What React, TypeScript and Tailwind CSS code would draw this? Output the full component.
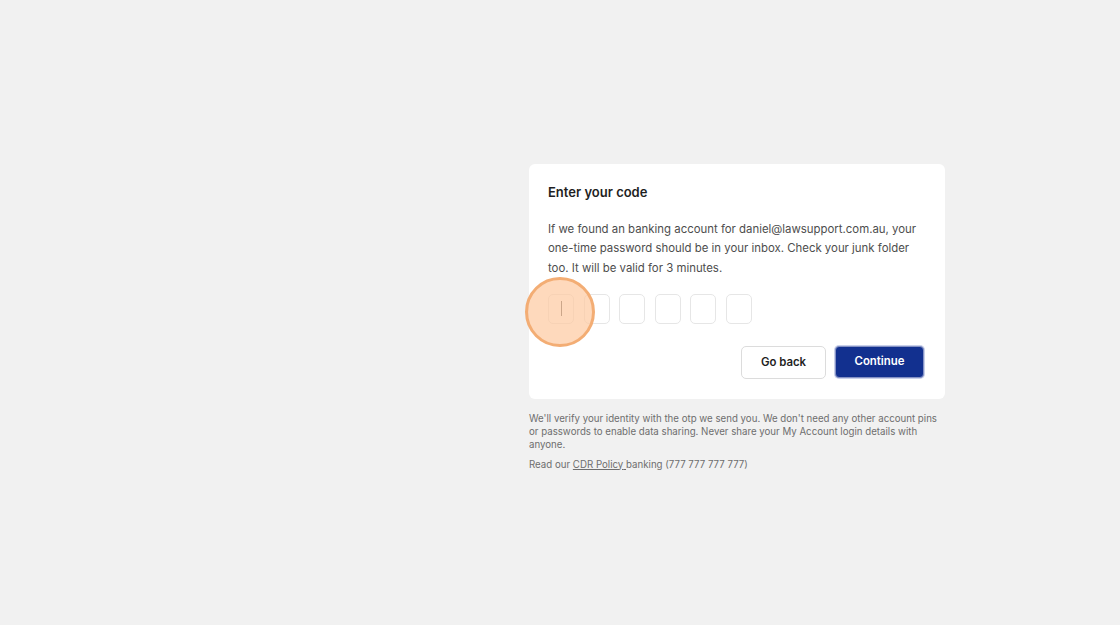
import React from "react";

const font = { fontFamily: "Inter, 'Liberation Sans', sans-serif" };

export default function App() {
  const boxes = [0, 1, 2, 3, 4, 5];

  return (
    <div
      className="min-h-screen w-full bg-[#f1f1f1] pl-[529px] pt-[164px]"
      style={font}>
      <div className="w-[416px]">
        {/* Card */}
        <div className="relative rounded-[6px] bg-white px-[19px] pb-5 pt-[18px]">
          <h1 className="text-[13px] font-semibold leading-[20px] text-[#1f1f1f]">
            Enter your code
          </h1>
          <p className="mt-[17.5px] text-[11.4px] leading-[19.5px] text-[#4d4d4d]">
            If we found an banking account for daniel@lawsupport.com.au, your
            one-time password should be in your inbox. Check your junk folder
            too. It will be valid for 3 minutes.
          </p>

          {/* OTP inputs */}
          <div className="relative mt-[15.5px] flex gap-[9.6px]">
            {boxes.map((i) => (
              <div
                key={i}
                className="flex h-[30px] w-[26px] items-center justify-center rounded-[5px] border border-[#e6e6e6] bg-white">
                {i === 0 && <span className="h-[15px] w-px bg-[#555555]" />}
              </div>
            ))}
            {/* click indicator */}
            <div className="pointer-events-none absolute left-[-23px] top-[-17px] h-[70px] w-[70px] rounded-full border-[3px] border-[#f3ad74] bg-[#fdc9a0]/70" />
          </div>

          {/* Buttons */}
          <div className="mt-[22px] flex justify-end gap-[9px] pr-[2px]">
            <button className="h-[33px] w-[85px] rounded-[5px] border border-[#dcdcdc] bg-white pt-[2px] text-[11.4px] font-semibold text-[#1f1f1f]">
              Go back
            </button>
            <button className="h-[32px] w-[89px] rounded-[4px] border border-[#8592c4] bg-[#12308f] pt-[1px] text-[11.4px] font-semibold text-white shadow-[0_0_0_1px_#c9d0ea]">
              Continue
            </button>
          </div>
        </div>

        {/* Footer text */}
        <div className="mt-[13px] text-[9.7px] leading-[13px] text-[#6e6e6e]">
          <p>
            We'll verify your identity with the otp we send you. We don't need
            any other account pins or passwords to enable data sharing. Never
            share your My Account login details with anyone.
          </p>
          <p className="mt-[7px]">
            Read our{" "}
            <a className="underline" href="#">
              CDR Policy{" "}
            </a>
            banking (777 777 777 777)
          </p>
        </div>
      </div>
    </div>
  );
}
